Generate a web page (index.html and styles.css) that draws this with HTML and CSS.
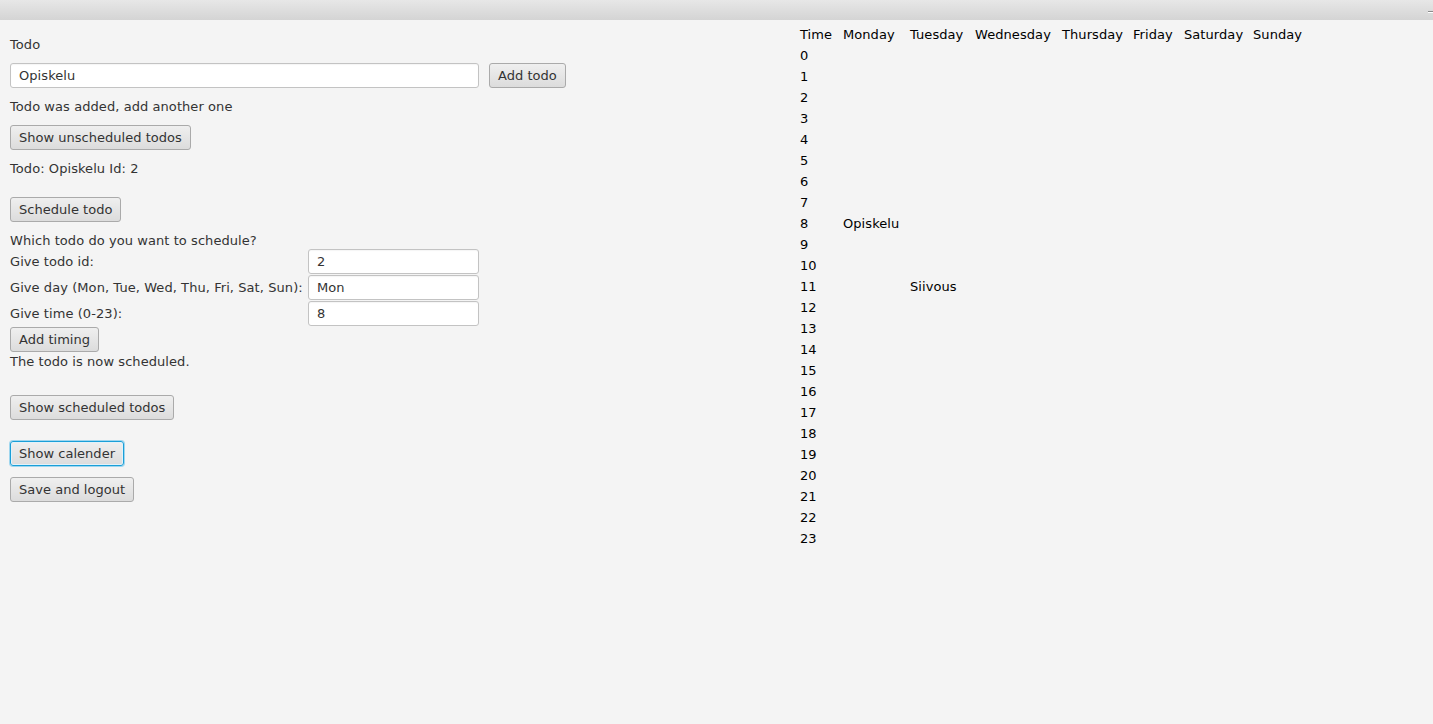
FILE: index.html
```html
<!DOCTYPE html>
<html>
<head>
<meta charset="utf-8">
<link rel="stylesheet" href="styles.css">
</head>
<body>
<div class="titlebar"><span class="dash"></span></div>
<div class="main">
  <div class="left">
    <div class="text m17">Todo</div>
    <div class="row m10">
      <input class="field wide" type="text" value="Opiskelu">
      <button class="btn">Add todo</button>
    </div>
    <div class="text m11">Todo was added, add another one</div>
    <button class="btn m10">Show unscheduled todos</button>
    <div class="text m11">Todo: Opiskelu Id: 2</div>
    <button class="btn m20">Schedule todo</button>
    <div class="text m11">Which todo do you want to schedule?</div>
    <div class="form">
      <div class="text flabel">Give todo id:</div>
      <input class="field" type="text" value="2">
      <div class="text flabel">Give day (Mon, Tue, Wed, Thu, Fri, Sat, Sun):</div>
      <input class="field" type="text" value="Mon">
      <div class="text flabel">Give time (0-23):</div>
      <input class="field" type="text" value="8">
    </div>
    <button class="btn m1">Add timing</button>
    <div class="text m2">The todo is now scheduled.</div>
    <button class="btn m25">Show scheduled todos</button>
    <button class="btn focused m21">Show calender</button>
    <button class="btn m11">Save and logout</button>
  </div>
  <div class="right">
    <div class="cal">
      <span class="t">Time</span><span>Monday</span><span>Tuesday</span><span>Wednesday</span><span>Thursday</span><span>Friday</span><span>Saturday</span><span>Sunday</span>
      <span class="t">0</span>
      <span class="t">1</span>
      <span class="t">2</span>
      <span class="t">3</span>
      <span class="t">4</span>
      <span class="t">5</span>
      <span class="t">6</span>
      <span class="t">7</span>
      <span class="t">8</span><span class="mon">Opiskelu</span>
      <span class="t">9</span>
      <span class="t">10</span>
      <span class="t">11</span><span class="tue">Siivous</span>
      <span class="t">12</span>
      <span class="t">13</span>
      <span class="t">14</span>
      <span class="t">15</span>
      <span class="t">16</span>
      <span class="t">17</span>
      <span class="t">18</span>
      <span class="t">19</span>
      <span class="t">20</span>
      <span class="t">21</span>
      <span class="t">22</span>
      <span class="t">23</span>
    </div>
  </div>
</div>
</body>
</html>
```
FILE: styles.css
```css
html, body {
  margin: 0;
  padding: 0;
  background: #f4f4f4;
  font-family: "DejaVu Sans", "Liberation Sans", sans-serif;
  font-size: 13px;
  letter-spacing: 0.07px;
  color: #333333;
}

.titlebar {
  height: 20px;
  background: linear-gradient(#e7e7e7, #d4d4d4);
  display: flex;
  justify-content: flex-end;
  align-items: flex-start;
}

.dash {
  width: 5px;
  height: 1px;
  margin-top: 11px;
  background: #8c8c8c;
  border-bottom: 1px solid #ffffff;
}

.main {
  display: flex;
  align-items: flex-start;
}

.left {
  width: 790px;
  box-sizing: border-box;
  padding-left: 10px;
  display: flex;
  flex-direction: column;
  align-items: flex-start;
}

.text {
  line-height: 16px;
  height: 16px;
  white-space: nowrap;
}

.m1 { margin-top: 1px; }
.m2 { margin-top: 2px; }
.m10 { margin-top: 10px; }
.m11 { margin-top: 11px; }
.m17 { margin-top: 17px; }
.m20 { margin-top: 20px; }
.m21 { margin-top: 21px; }
.m25 { margin-top: 25px; }

.row {
  display: flex;
  gap: 10px;
}

.field {
  box-sizing: border-box;
  height: 25px;
  width: 171px;
  margin: 0;
  padding: 0 8px;
  border: 1px solid #c3c3c3;
  border-radius: 3px;
  background: #ffffff;
  box-shadow: inset 0 1px 1px rgba(0, 0, 0, 0.04);
  font-family: "DejaVu Sans", "Liberation Sans", sans-serif;
  font-size: 13px;
  letter-spacing: 0.07px;
  color: #333333;
  outline: none;
}

.field.wide {
  width: 469px;
}

.btn {
  box-sizing: border-box;
  height: 25px;
  margin-left: 0;
  margin-right: 0;
  margin-bottom: 0;
  padding: 0 8px;
  border: 1px solid #aaaaaa;
  border-radius: 3px;
  background: linear-gradient(#efefef, #dcdcdc);
  font-family: "DejaVu Sans", "Liberation Sans", sans-serif;
  font-size: 13px;
  letter-spacing: 0.02px;
  line-height: 23px;
  color: #333333;
  white-space: nowrap;
}

.btn.focused {
  border-color: #1a9fd8;
  box-shadow: 0 0 0 1px #9fd6ee, inset 0 0 0 1px #e2f2fa;
}

.form {
  display: grid;
  grid-template-columns: 298px 171px;
  grid-auto-rows: 25px;
  row-gap: 1px;
}

.flabel {
  align-self: center;
}

.right {
  padding-left: 10px;
  padding-top: 4px;
}

.cal {
  display: grid;
  grid-template-columns: 43px 67px 65px 87px 71px 51px 69px auto;
  grid-auto-rows: 21px;
  line-height: 21px;
  color: #000000;
  white-space: nowrap;
}

.cal .t { grid-column: 1; }
.cal .mon { grid-column: 2; }
.cal .tue { grid-column: 3; }
```
